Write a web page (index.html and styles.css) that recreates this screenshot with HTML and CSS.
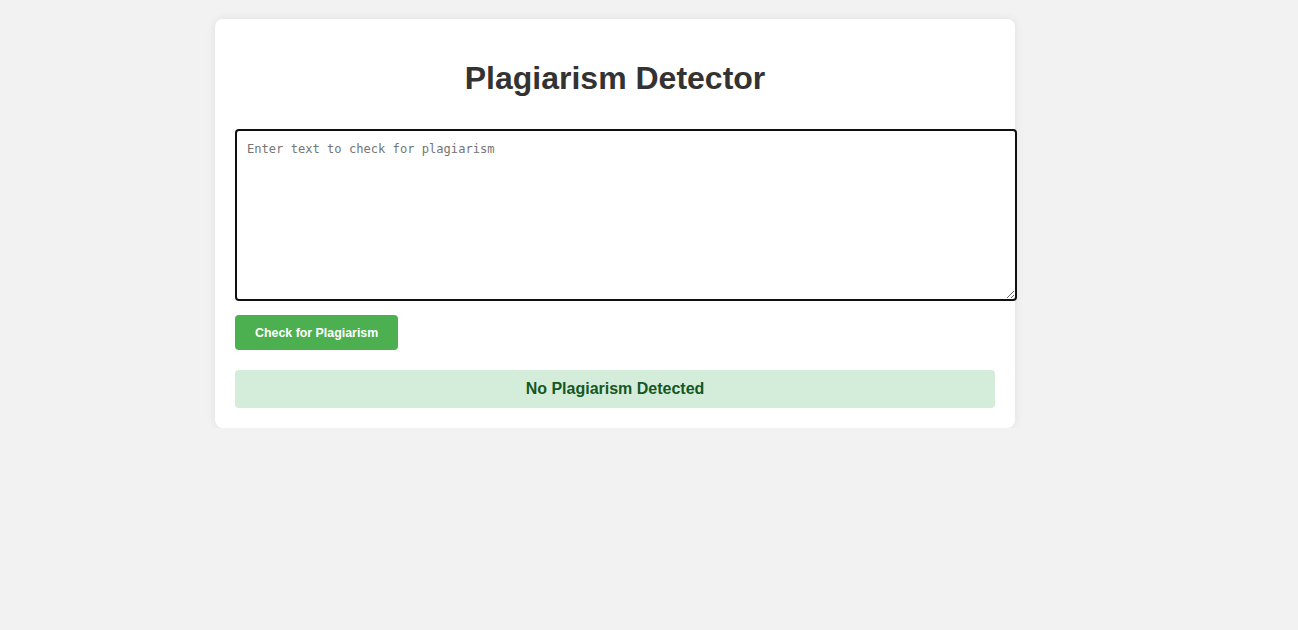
FILE: index.html
```html
<!DOCTYPE html>
<html lang="en">
<head>
<meta charset="utf-8">
<title>Plagiarism Detector</title>
<link rel="stylesheet" href="styles.css">
</head>
<body>
  <main class="card">
    <h1 class="title">Plagiarism Detector</h1>
    <textarea class="input" placeholder="Enter text to check for plagiarism" autofocus></textarea>
    <div class="actions">
      <button class="check-btn" type="button">Check for Plagiarism</button>
    </div>
    <div class="result">No Plagiarism Detected</div>
  </main>
</body>
</html>
```

FILE: styles.css
```css
html, body {
  margin: 0;
  padding: 0;
}

body {
  background: #f2f2f2;
  font-family: "Liberation Sans", Arial, sans-serif;
  padding-top: 19px;
}

.card {
  display: flex;
  flex-direction: column;
  align-items: flex-start;
  width: 760px;
  margin: 0 auto 0 215px;
  padding: 20px;
  background: #ffffff;
  border-radius: 8px;
  box-shadow: 0 0 10px rgba(0, 0, 0, 0.08);
}

.title {
  align-self: stretch;
  margin: 21px 0 33px;
  text-align: center;
  font-size: 32px;
  font-weight: bold;
  color: #333333;
  line-height: 36px;
}

.input {
  display: block;
  width: calc(100% - 2px);
  height: 150px;
  margin: 0 0 14px;
  padding: 11px 10px 7px;
  border: 2px solid #101010;
  border-radius: 4px;
  outline: none;
  font-family: "DejaVu Sans Mono", "Liberation Mono", monospace;
  font-size: 12.1px;
  line-height: 15px;
  color: #222;
  caret-color: #000;
  resize: both;
}

.input::placeholder {
  color: #757575;
}

.check-btn {
  display: block;
  height: 35px;
  padding: 0 20px;
  border: none;
  border-radius: 4px;
  background: #4caf50;
  color: #ffffff;
  font-family: "Liberation Sans", Arial, sans-serif;
  font-size: 12.4px;
  font-weight: bold;
  cursor: pointer;
}

.result {
  align-self: stretch;
  margin-top: 20px;
  padding: 10px;
  border-radius: 4px;
  background: #d4edda;
  color: #155724;
  text-align: center;
  font-size: 16px;
  font-weight: bold;
  line-height: 18px;
}
```
